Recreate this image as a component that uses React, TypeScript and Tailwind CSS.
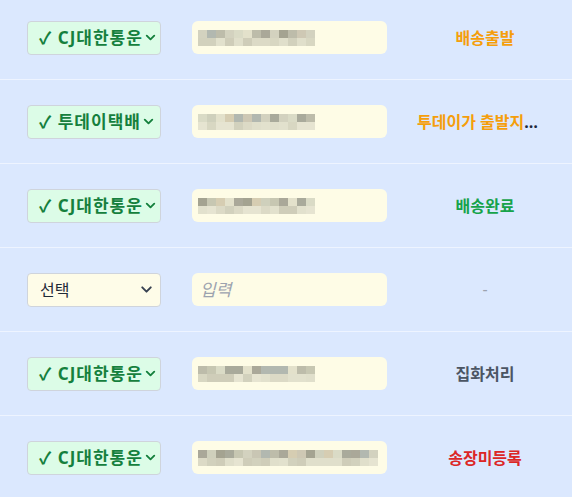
import { ChevronDown } from "lucide-react";

type Row = {
  carrier: string | null;
  blocks: number;
  seed: number;
  status: string;
  tone: string;
  cut?: boolean;
};

const rows: Row[] = [
  { carrier: "CJ대한통운", blocks: 13, seed: 3, status: "배송출발", tone: "text-[#f59e0b]" },
  { carrier: "투데이택배", blocks: 13, seed: 11, status: "투데이가 출발지에서 상품을 인수", tone: "text-[#f59e0b]", cut: true },
  { carrier: "CJ대한통운", blocks: 13, seed: 7, status: "배송완료", tone: "text-[#16a34a]" },
  { carrier: null, blocks: 0, seed: 0, status: "-", tone: "text-[#9ca3af] font-normal text-xs" },
  { carrier: "CJ대한통운", blocks: 13, seed: 19, status: "집화처리", tone: "text-[#4b5563]" },
  { carrier: "CJ대한통운", blocks: 20, seed: 5, status: "송장미등록", tone: "text-[#dc2626]" },
];

const dark = ["#c9c6b4", "#d6cdb2", "#b2b8b0", "#e3e1cb", "#d3d2bf", "#aaa899", "#a4a391", "#c7c7b2", "#dadbc6", "#cec8b4", "#a9aa9b", "#cfd0bc", "#bdbcaa"];
const light = ["#e2e1cd", "#dcdac6", "#d8d7c2", "#e6e4d1", "#d2d1bd", "#e0dfcb", "#cfcdb9"];

// pixelated tracking number
function Mosaic({ count, seed }: { count: number; seed: number }) {
  let s = seed;
  const next = (n: number) => {
    s = (s * 9301 + 49297) % 233280;
    return Math.floor((s / 233280) * n);
  };
  const top = Array.from({ length: count }, () => dark[next(dark.length)]);
  const bottom = Array.from({ length: count }, () => light[next(light.length)]);
  return (
    <div className="flex flex-col">
      <div className="flex">
        {top.map((c, i) => (
          <span key={i} className="block w-[9px] h-[8px]" style={{ backgroundColor: c }} />
        ))}
      </div>
      <div className="flex">
        {bottom.map((c, i) => (
          <span key={i} className="block w-[9px] h-[8px]" style={{ backgroundColor: c }} />
        ))}
      </div>
    </div>
  );
}

function CarrierSelect({ carrier }: { carrier: string | null }) {
  if (!carrier) {
    return (
      <div className="flex items-center justify-between w-[134px] h-[34px] pl-[12px] pr-[5px] rounded-[4px] border border-[#cfd4dc] bg-[#fefce8] text-[16px] text-[#1f2937]">
        <span>선택</span>
        <ChevronDown className="w-[17px] h-[17px] text-[#374151]" strokeWidth={2.75} />
      </div>
    );
  }
  return (
    <div className="flex items-center w-[134px] h-[34px] pl-[11px] pr-[3px] rounded-[4px] border border-[#cfd4dc] bg-[#dcfce7] text-[17px] font-bold text-[#15803d] overflow-hidden whitespace-nowrap">
      <span className="tracking-[1px]">✓ {carrier}</span>
      <ChevronDown className="w-[15px] h-[15px] shrink-0 text-[#15803d]" strokeWidth={3} />
    </div>
  );
}

export default function App() {
  return (
    <div
      className="w-[572px] h-[497px] overflow-hidden bg-[#dbe8fe]"
      style={{ fontFamily: '"Noto Sans", "Noto Sans CJK KR", sans-serif' }}
    >
      <div className="-mt-[4px]">
        {rows.map((row, i) => (
          <div key={i} className="flex items-center h-[84px] border-b border-[#eef4ff] pl-[27px]">
            <CarrierSelect carrier={row.carrier} />
            <div className="ml-[31px] w-[195px] h-[33px] rounded-[6px] bg-[#fefce6] flex items-center pl-[6px]">
              {row.blocks > 0 ? (
                <Mosaic count={row.blocks} seed={row.seed} />
              ) : (
                <span className="pl-[2px] italic text-[17px] text-[#9ca3af]">입력</span>
              )}
            </div>
            <div className="ml-[30px] flex-1 flex justify-center pr-[19px]">
              {row.cut ? (
                <div className="max-w-[124px] mr-[12px] truncate text-[16px] font-bold text-[#1e293b]">
                  <span className={row.tone}>{row.status}</span>
                </div>
              ) : (
                <span className={`text-[16px] font-bold ${row.tone}`}>{row.status}</span>
              )}
            </div>
          </div>
        ))}
      </div>
    </div>
  );
}
